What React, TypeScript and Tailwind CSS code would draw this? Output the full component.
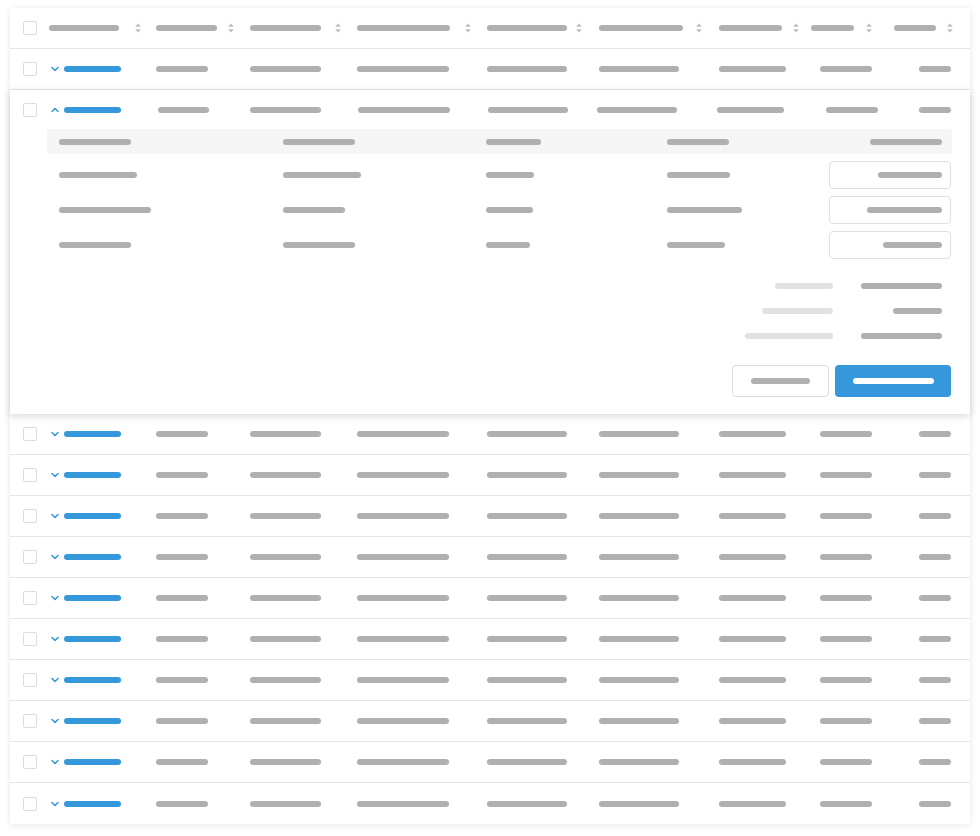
import React from 'react';

// Placeholder bar
const Bar: React.FC<{ w: string; tone?: 'dark' | 'light' | 'blue' | 'white'; className?: string }> = ({
  w,
  tone = 'dark',
  className = '',
}) => {
  const color =
    tone === 'blue'
      ? 'bg-[#3498db]'
      : tone === 'light'
      ? 'bg-[#e2e2e2]'
      : tone === 'white'
      ? 'bg-white'
      : 'bg-[#b0b0b0]';
  return <span className={`block h-[6px] shrink-0 rounded-full ${color} ${w} ${className}`} />;
};

const Checkbox: React.FC = () => (
  <span className="block h-[14px] w-[14px] rounded-[2px] border border-[#dcdcdc] bg-white" />
);

const SortIcon: React.FC<{ className?: string }> = ({ className = '' }) => (
  <svg width="6" height="10" viewBox="0 0 6 10" className={`shrink-0 ${className}`}>
    <path d="M3 0.5 L5.8 3.8 H0.2 Z" fill="#bdbdbd" />
    <path d="M3 9.5 L5.8 6.2 H0.2 Z" fill="#bdbdbd" />
  </svg>
);

const Chevron: React.FC<{ up?: boolean }> = ({ up }) => (
  <svg width="8" height="6" viewBox="0 0 8 6" className="ml-[2px] shrink-0">
    <path
      d={up ? 'M1 4.5 L4 1.5 L7 4.5' : 'M1 1.5 L4 4.5 L7 1.5'}
      fill="none"
      stroke="#3498db"
      strokeWidth="1.5"
      strokeLinecap="round"
      strokeLinejoin="round"
    />
  </svg>
);

const gridCols = 'grid grid-cols-[39px_107px_94px_107px_130px_112px_120px_92px_83px_1fr]';

// Header columns: bar width + gap to the sort arrows
const headerCols = [
  { w: 'w-[70px]', gap: 'ml-[16px]' },
  { w: 'w-[61px]', gap: 'ml-[11px]' },
  { w: 'w-[71px]', gap: 'ml-[14px]' },
  { w: 'w-[93px]', gap: 'ml-[15px]' },
  { w: 'w-[80px]', gap: 'ml-[9px]' },
  { w: 'w-[84px]', gap: 'ml-[13px]' },
  { w: 'w-[63px]', gap: 'ml-[11px]' },
  { w: 'w-[43px]', gap: 'ml-[12px]' },
  { w: 'w-[42px]', gap: 'ml-[11px]' },
];

// Body cells for columns 2..8 (column 9 is right aligned)
const rowCells = [
  { w: 'w-[52px]', ml: '' },
  { w: 'w-[71px]', ml: '' },
  { w: 'w-[92px]', ml: '' },
  { w: 'w-[80px]', ml: '' },
  { w: 'w-[80px]', ml: '' },
  { w: 'w-[67px]', ml: '' },
  { w: 'w-[52px]', ml: 'ml-[9px]' },
];

const expandedCells = [
  { w: 'w-[51px]', ml: 'ml-[2px]' },
  { w: 'w-[71px]', ml: '' },
  { w: 'w-[92px]', ml: 'ml-[1px]' },
  { w: 'w-[80px]', ml: 'ml-[1px]' },
  { w: 'w-[80px]', ml: '-ml-[2px]' },
  { w: 'w-[67px]', ml: '-ml-[2px]' },
  { w: 'w-[52px]', ml: 'ml-[15px]' },
];

const RowContent: React.FC<{ cells: { w: string; ml: string }[]; up?: boolean }> = ({ cells, up }) => (
  <>
    <div className="flex items-center pl-[13px]">
      <Checkbox />
    </div>
    <div className="flex items-center">
      <Chevron up={up} />
      <Bar w="w-[57px]" tone="blue" className="ml-[5px]" />
    </div>
    {cells.map((c, i) => (
      <div key={i} className="flex items-center">
        <Bar w={c.w} className={c.ml} />
      </div>
    ))}
    <div className="flex items-center justify-end pr-[19px]">
      <Bar w="w-[32px]" />
    </div>
  </>
);

// Sub table inside the expanded row
const subHeader = ['w-[72px]', 'w-[72px]', 'w-[55px]', 'w-[62px]'];
const subRows = [
  { cols: ['w-[78px]', 'w-[78px]', 'w-[48px]', 'w-[63px]'], input: 'w-[64px]' },
  { cols: ['w-[92px]', 'w-[62px]', 'w-[47px]', 'w-[75px]'], input: 'w-[75px]' },
  { cols: ['w-[72px]', 'w-[72px]', 'w-[44px]', 'w-[58px]'], input: 'w-[59px]' },
];
const subGrid = 'grid grid-cols-[236px_203px_181px_162px_1fr]';

const totals = [
  { label: 'w-[58px]', value: 'w-[81px]' },
  { label: 'w-[71px]', value: 'w-[49px]' },
  { label: 'w-[88px]', value: 'w-[81px]' },
];

const ExpandedPanel: React.FC = () => (
  <div className="relative z-10 bg-white shadow-[0_2px_8px_rgba(0,0,0,0.16)]">
    <div className={`${gridCols} h-[39px]`}>
      <RowContent cells={expandedCells} up />
    </div>

    <div className="ml-[37px] mr-[18px] pb-[17px]">
      {/* sub table header */}
      <div className={`${subGrid} h-[25px] rounded-[3px] bg-[#f5f5f5]`}>
        {subHeader.map((w, i) => (
          <div key={i} className={`flex items-center ${i === 0 ? 'pl-[12px]' : ''}`}>
            <Bar w={w} />
          </div>
        ))}
        <div className="flex items-center justify-end pr-[10px]">
          <Bar w="w-[72px]" />
        </div>
      </div>

      {/* sub table rows */}
      <div className="mt-[7px] flex flex-col gap-[7px]">
        {subRows.map((r, ri) => (
          <div key={ri} className={`${subGrid} h-[28px]`}>
            {r.cols.map((w, i) => (
              <div key={i} className={`flex items-center ${i === 0 ? 'pl-[12px]' : ''}`}>
                <Bar w={w} />
              </div>
            ))}
            <div className="mr-[1px] flex items-center justify-end rounded-[4px] border border-[#e0e0e0] pr-[8px]">
              <Bar w={r.input} />
            </div>
          </div>
        ))}
      </div>

      {/* totals */}
      <div className="mt-[14px] flex flex-col">
        {totals.map((t, i) => (
          <div key={i} className="flex h-[25px] items-center justify-end pr-[10px]">
            <Bar w={t.label} tone="light" />
            <div className="flex w-[109px] justify-end">
              <Bar w={t.value} />
            </div>
          </div>
        ))}
      </div>

      {/* actions */}
      <div className="mt-[17px] flex justify-end gap-[6px] pr-[1px]">
        <button className="flex h-[32px] w-[97px] items-center justify-center rounded-[4px] border border-[#dcdcdc] bg-white">
          <Bar w="w-[59px]" />
        </button>
        <button className="flex h-[32px] w-[116px] items-center justify-center rounded-[4px] bg-[#3498db]">
          <Bar w="w-[81px]" tone="white" />
        </button>
      </div>
    </div>
  </div>
);

const App: React.FC = () => {
  const collapsedAfter = Array.from({ length: 10 });

  return (
    <div className="min-h-screen bg-white pt-[8px] font-['Liberation_Sans',sans-serif]">
      <div className="ml-[10px] w-[960px] bg-white shadow-[0_1px_7px_rgba(0,0,0,0.1)]">
        {/* Header */}
        <div className={`${gridCols} h-[41px] border-b border-[#e6e6e6]`}>
          <div className="flex items-center pl-[13px]">
            <Checkbox />
          </div>
          {headerCols.map((c, i) => (
            <div key={i} className="flex items-center">
              <Bar w={c.w} />
              <SortIcon className={c.gap} />
            </div>
          ))}
        </div>

        {/* First collapsed row */}
        <div className={`${gridCols} h-[41px] border-b border-[#e6e6e6]`}>
          <RowContent cells={rowCells} />
        </div>

        {/* Expanded row */}
        <ExpandedPanel />

        {/* Remaining rows */}
        {collapsedAfter.map((_, i) => (
          <div
            key={i}
            className={`${gridCols} h-[41px] ${i < collapsedAfter.length - 1 ? 'border-b border-[#e6e6e6]' : ''}`}
          >
            <RowContent cells={rowCells} />
          </div>
        ))}
      </div>
    </div>
  );
};

export default App;
